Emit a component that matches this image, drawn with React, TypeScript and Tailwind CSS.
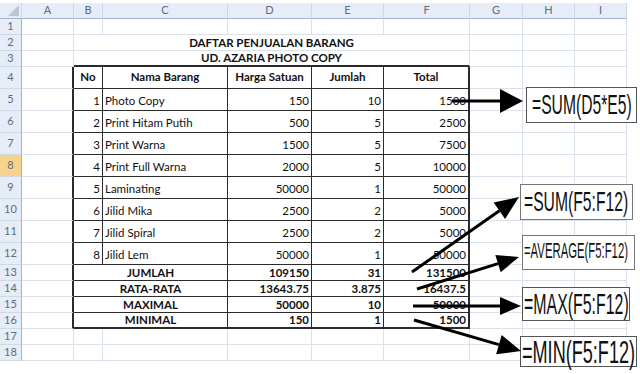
import React from 'react';

const COLS = ['A', 'B', 'C', 'D', 'E', 'F', 'G', 'H', 'I'];

const items = [
  { no: 1, nama: 'Photo Copy', harga: '150', jumlah: '10', total: '1500' },
  { no: 2, nama: 'Print Hitam Putih', harga: '500', jumlah: '5', total: '2500' },
  { no: 3, nama: 'Print Warna', harga: '1500', jumlah: '5', total: '7500' },
  { no: 4, nama: 'Print Full Warna', harga: '2000', jumlah: '5', total: '10000' },
  { no: 5, nama: 'Laminating', harga: '50000', jumlah: '1', total: '50000' },
  { no: 6, nama: 'Jilid Mika', harga: '2500', jumlah: '2', total: '5000' },
  { no: 7, nama: 'Jilid Spiral', harga: '2500', jumlah: '2', total: '5000' },
  { no: 8, nama: 'Jilid Lem', harga: '50000', jumlah: '1', total: '50000' },
];

const summary = [
  { label: 'JUMLAH', harga: '109150', jumlah: '31', total: '131500' },
  { label: 'RATA-RATA', harga: '13643.75', jumlah: '3.875', total: '16437.5' },
  { label: 'MAXIMAL', harga: '50000', jumlah: '10', total: '50000' },
  { label: 'MINIMAL', harga: '150', jumlah: '1', total: '1500' },
];

// light gridline cell
const grid = 'border-r border-b border-[#dbe1ea]';
const rowHead =
  'flex items-center justify-center bg-[#e6edf6] border-r border-b border-r-[#9fb5cf] border-b-[#cfd9e6] text-[11px] text-[#5c6b86]';

const RowHead = ({ n }: { n: number }) => (
  <div className={n === 8 ? rowHead.replace('bg-[#e6edf6]', 'bg-[#f7d48c]') : rowHead}>{n}</div>
);

const Empty = ({ extra = '' }: { extra?: string }) => <div className={extra || grid}></div>;

// column A cell next to the table carries the thick left edge
const aEdge = 'border-b border-b-[#dbe1ea] border-r-2 border-r-[#2b2b2b]';

function arrowHead(x1: number, y1: number, x2: number, y2: number, len: number, half: number) {
  const dx = x2 - x1;
  const dy = y2 - y1;
  const d = Math.hypot(dx, dy);
  const ux = dx / d;
  const uy = dy / d;
  const bx = x2 - ux * len;
  const by = y2 - uy * len;
  return {
    base: [bx, by],
    pts: `${x2},${y2} ${bx - uy * half},${by + ux * half} ${bx + uy * half},${by - ux * half}`,
  };
}

const arrows = [
  { x1: 452, y1: 101, x2: 523, y2: 101, len: 23, half: 12 },
  { x1: 412, y1: 272, x2: 519, y2: 197, len: 24, half: 10 },
  { x1: 417, y1: 289, x2: 519, y2: 257, len: 22, half: 9 },
  { x1: 413, y1: 306, x2: 521, y2: 306, len: 21, half: 9 },
  { x1: 414, y1: 320, x2: 521, y2: 351, len: 23, half: 10 },
];

export default function App() {
  return (
    <div className="relative w-[640px] h-[374px] bg-white overflow-hidden font-[Lato,sans-serif] text-[#111]">
      <div className="pt-[3px]">
        <div className="grid grid-cols-[22px_52px_29px_125px_84px_72px_86px_53px_52px_52px] grid-rows-[16px_16px_16px_16px_22px_22px_22px_22px_22px_22px_22px_22px_22px_16px_16px_16px_16px_16px_16px] w-[627px]">
          {/* column headers */}
          <div className="relative bg-[#e6edf6] border-r border-b border-r-[#cfd9e6] border-b-[#9fb5cf]">
            <svg className="absolute right-[2px] bottom-[2px]" width="11" height="11" viewBox="0 0 11 11">
              <polygon points="11,0 11,11 0,11" fill="#b9c6d6" />
            </svg>
          </div>
          {COLS.map((c) => (
            <div
              key={c}
              className="flex items-center justify-center bg-[#e6edf6] border-r border-b border-r-[#cfd9e6] border-b-[#9fb5cf] text-[11px] text-[#5c6b86]"
            >
              {c}
            </div>
          ))}

          {/* row 1 */}
          <RowHead n={1} />
          {COLS.map((c) => (
            <Empty key={c} />
          ))}

          {/* rows 2-3 titles */}
          <RowHead n={2} />
          <Empty />
          <div className={`col-span-5 flex items-center justify-center text-[11.5px] font-bold ${grid}`}>
            DAFTAR PENJUALAN BARANG
          </div>
          <Empty />
          <Empty />
          <Empty />

          <RowHead n={3} />
          <Empty />
          <div className="col-span-5 flex items-center justify-center text-[11.5px] font-bold border-r border-r-[#dbe1ea] border-b-2 border-b-[#2b2b2b]">
            UD. AZARIA PHOTO COPY
          </div>
          <Empty />
          <Empty />
          <Empty />

          {/* row 4 headers */}
          <RowHead n={4} />
          <Empty extra={aEdge} />
          {['No', 'Nama Barang', 'Harga Satuan', 'Jumlah', 'Total'].map((h, i) => (
            <div
              key={h}
              className={`flex items-end justify-center pb-[3px] text-[11.5px] font-bold border-b border-b-[#2b2b2b] ${
                i === 4 ? 'border-r-2' : 'border-r'
              } border-r-[#2b2b2b]`}
            >
              {h}
            </div>
          ))}
          <Empty />
          <Empty />
          <Empty />

          {/* rows 5-12 data */}
          {items.map((it, idx) => (
            <React.Fragment key={it.no}>
              <RowHead n={idx + 5} />
              <Empty extra={aEdge} />
              <div className="flex items-end justify-end pr-[2px] pb-[1px] text-[11.5px] border-r border-b border-[#2b2b2b]">
                {it.no}
              </div>
              <div className="flex items-end pl-[2px] pb-[1px] text-[11.5px] border-r border-b border-[#2b2b2b]">
                {it.nama}
              </div>
              <div className="flex items-end justify-end pr-[2px] pb-[1px] text-[11.5px] border-r border-b border-[#2b2b2b]">
                {it.harga}
              </div>
              <div className="flex items-end justify-end pr-[2px] pb-[1px] text-[11.5px] border-r border-b border-[#2b2b2b]">
                {it.jumlah}
              </div>
              <div className="flex items-end justify-end pr-[2px] pb-[1px] text-[11.5px] border-r-2 border-b border-[#2b2b2b]">
                {it.total}
              </div>
              <Empty />
              <Empty />
              <Empty />
            </React.Fragment>
          ))}

          {/* rows 13-16 summary */}
          {summary.map((s, idx) => {
            const last = idx === summary.length - 1;
            const bb = last ? 'border-b-2' : 'border-b';
            return (
              <React.Fragment key={s.label}>
                <RowHead n={idx + 13} />
                <Empty extra={aEdge} />
                <div
                  className={`col-span-2 flex items-center justify-center text-[11.5px] font-bold border-r ${bb} border-[#2b2b2b]`}
                >
                  {s.label}
                </div>
                <div className={`flex items-center justify-end pr-[2px] text-[11.5px] font-bold border-r ${bb} border-[#2b2b2b]`}>
                  {s.harga}
                </div>
                <div className={`flex items-center justify-end pr-[2px] text-[11.5px] font-bold border-r ${bb} border-[#2b2b2b]`}>
                  {s.jumlah}
                </div>
                <div className={`flex items-center justify-end pr-[2px] text-[11.5px] font-bold border-r-2 ${bb} border-[#2b2b2b]`}>
                  {s.total}
                </div>
                <Empty />
                <Empty />
                <Empty />
              </React.Fragment>
            );
          })}

          {/* rows 17-18 */}
          {[17, 18].map((n) => (
            <React.Fragment key={n}>
              <RowHead n={n} />
              {COLS.map((c) => (
                <Empty key={c} />
              ))}
            </React.Fragment>
          ))}
        </div>
      </div>

      {/* formula callouts */}
      <div className="absolute left-[526px] top-[87px] w-[111px] h-[36px] border border-[#555] bg-white flex items-center pl-[5px] font-['Liberation_Sans',Arial,sans-serif]">
        <span className="inline-block shrink-0 origin-left scale-x-[0.56] whitespace-nowrap text-[28px] leading-none">=SUM(D5*E5)</span>
      </div>
      <div className="absolute left-[520px] top-[184px] w-[113px] h-[36px] border border-[#777] bg-white flex items-center pl-[3px] font-['Liberation_Sans',Arial,sans-serif]">
        <span className="inline-block shrink-0 origin-left scale-x-[0.56] whitespace-nowrap text-[28px] leading-none">=SUM(F5:F12)</span>
      </div>
      <div className="absolute left-[522px] top-[235px] w-[113px] h-[35px] border border-[#777] bg-white flex items-center pl-[1px] pb-[3px] font-['Liberation_Sans',Arial,sans-serif]">
        <span className="inline-block shrink-0 origin-left scale-x-[0.515] whitespace-nowrap text-[22px] leading-none">=AVERAGE(F5:F12)</span>
      </div>
      <div className="absolute left-[522px] top-[287px] w-[108px] h-[34px] border border-[#555] bg-white flex items-center pl-[1px] font-['Liberation_Sans',Arial,sans-serif]">
        <span className="inline-block shrink-0 origin-left scale-x-[0.53] whitespace-nowrap text-[30px] leading-none">=MAX(F5:F12)</span>
      </div>
      <div className="absolute left-[520px] top-[336px] w-[117px] h-[31px] border border-[#555] bg-white flex items-center pl-[1px] font-['Liberation_Sans',Arial,sans-serif]">
        <span className="inline-block shrink-0 origin-left scale-x-[0.565] whitespace-nowrap text-[32px] leading-none">=MIN(F5:F12)</span>
      </div>

      {/* arrows */}
      <svg className="absolute left-0 top-0 pointer-events-none" width="640" height="374">
        {arrows.map((a, i) => {
          const h = arrowHead(a.x1, a.y1, a.x2, a.y2, a.len, a.half);
          return (
            <g key={i}>
              <line x1={a.x1} y1={a.y1} x2={h.base[0]} y2={h.base[1]} stroke="#000" strokeWidth="3" />
              <polygon points={h.pts} fill="#000" />
            </g>
          );
        })}
      </svg>
    </div>
  );
}
